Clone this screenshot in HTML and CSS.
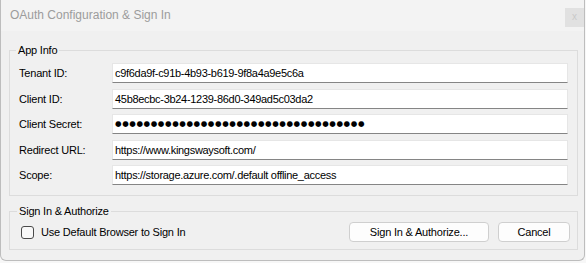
FILE: index.html
```html
<!DOCTYPE html>
<html>
<head>
<meta charset="utf-8">
<link rel="stylesheet" href="styles.css">
</head>
<body>
<div class="window">
  <div class="titlebar">
    <span class="title">OAuth Configuration &amp; Sign In</span>
    <span class="close">x</span>
  </div>
  <div class="body">
    <fieldset class="group app">
      <legend>App Info</legend>
      <div class="form">
        <label>Tenant ID:</label>
        <div class="input">c9f6da9f-c91b-4b93-b619-9f8a4a9e5c6a</div>
        <label>Client ID:</label>
        <div class="input">45b8ecbc-3b24-1239-86d0-349ad5c03da2</div>
        <label>Client Secret:</label>
        <div class="input secret">●●●●●●●●●●●●●●●●●●●●●●●●●●●●●●●●●●●</div>
        <label>Redirect URL:</label>
        <div class="input">https://www.kingswaysoft.com/</div>
        <label>Scope:</label>
        <div class="input">https://storage.azure.com/.default offline_access</div>
      </div>
    </fieldset>
    <fieldset class="group sign">
      <legend>Sign In &amp; Authorize</legend>
      <div class="actions">
        <div class="check"><span class="box"></span><span>Use Default Browser to Sign In</span></div>
        <div class="buttons">
          <span class="btn wide">Sign In &amp; Authorize...</span>
          <span class="btn">Cancel</span>
        </div>
      </div>
    </fieldset>
  </div>
</div>
</body>
</html>
```
FILE: styles.css
```css
html, body {
  margin: 0;
  padding: 0;
  background: #f7f7f7;
  font-family: "Liberation Sans", Arial, sans-serif;
  font-size: 11px;
  color: #000;
}
.window {
  width: 585px;
  height: 261px;
  box-sizing: border-box;
  border: 1px solid #bdbdbd;
  border-top: none;
  border-radius: 0 0 6px 6px;
  background: #f0f0f0;
  overflow: hidden;
  display: flex;
  flex-direction: column;
}
.titlebar {
  height: 31px;
  flex: none;
  background: #f3f3f3;
  display: flex;
  justify-content: space-between;
  align-items: flex-start;
}
.title {
  font-size: 12px;
  color: #9c9c9c;
  padding-left: 9px;
  line-height: 31px;
}
.close {
  margin-top: 8px;
  width: 19px;
  height: 19px;
  background: #e1e1e1;
  color: #c9c9c9;
  font-size: 10px;
  line-height: 18px;
  text-align: center;
}
.body {
  padding: 12px 6px 0 8px;
  display: flex;
  flex-direction: column;
  letter-spacing: -0.2px;
}
.group {
  margin: 0;
  border: 1px solid #dcdcdc;
  min-width: 0;
}
.group legend {
  padding: 0 2px;
  margin-left: -3px;
  line-height: 14px;
}
.app {
  padding: 6px 9px 10px 9px;
}
.form {
  display: grid;
  grid-template-columns: 93px 1fr;
  row-gap: 5.5px;
  align-items: center;
}
.input {
  height: 20px;
  box-sizing: border-box;
  background: #fff;
  border: 1px solid #e6e6e6;
  border-bottom-color: #858585;
  padding-left: 2px;
  line-height: 18px;
  white-space: nowrap;
  overflow: hidden;
  letter-spacing: -0.3px;
}
.secret {
  font-family: "DejaVu Sans", sans-serif;
  font-size: 7.5px;
  letter-spacing: 0.6px;
}
.sign {
  margin-top: 8px;
  padding: 4px 7px 7px 10px;
}
.actions {
  display: flex;
  justify-content: space-between;
  align-items: center;
}
.check {
  display: flex;
  align-items: center;
  gap: 7px;
  margin-left: 1px;
}
.box {
  width: 13px;
  height: 13px;
  box-sizing: border-box;
  border: 1px solid #4a4a4a;
  border-radius: 3px;
  background: #f8f8f8;
}
.buttons {
  display: flex;
  gap: 9px;
}
.btn {
  height: 20px;
  width: 72px;
  box-sizing: border-box;
  border: 1px solid #cfcfcf;
  border-radius: 4px;
  background: #fdfdfd;
  text-align: center;
  line-height: 18px;
}
.btn.wide {
  width: 140px;
}
```
